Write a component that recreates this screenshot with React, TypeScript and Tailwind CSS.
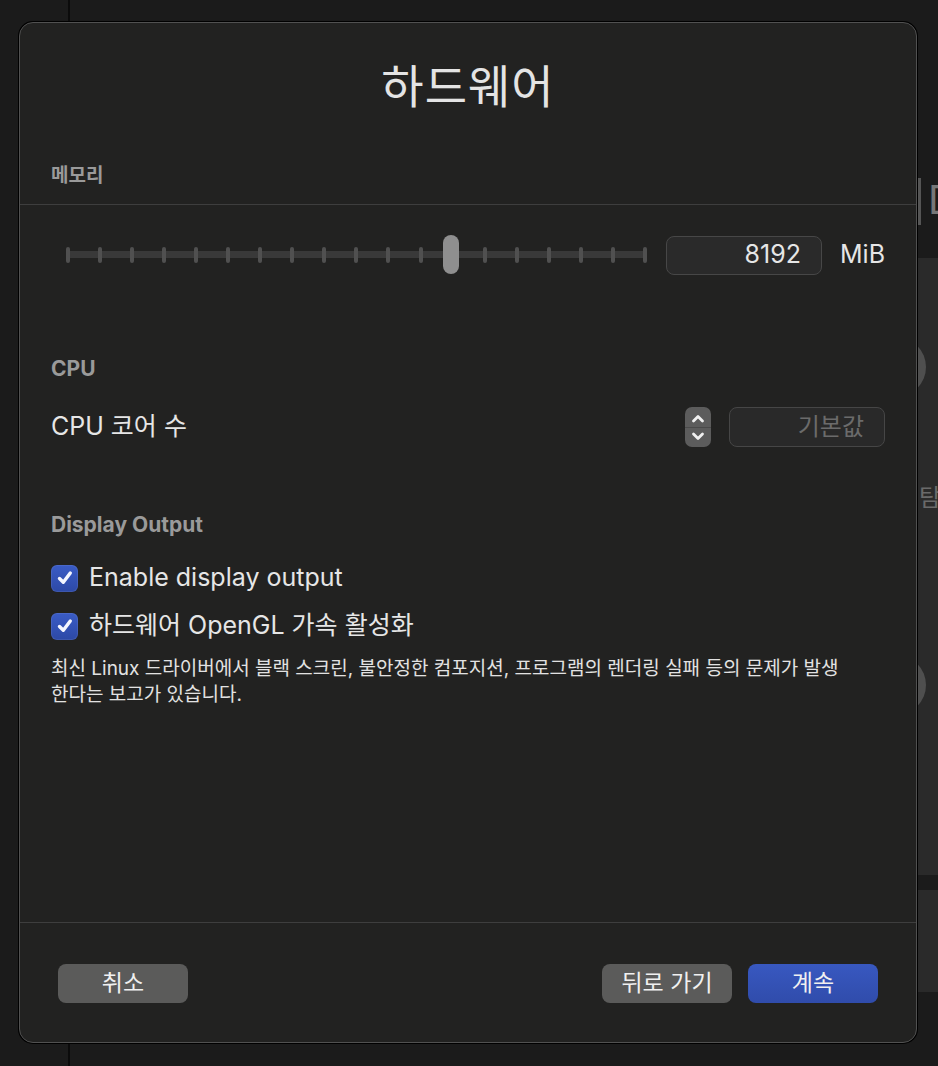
import React from 'react'

const font = { fontFamily: 'Inter, "Noto Sans CJK KR", "Noto Sans", sans-serif' }

function Slider() {
  const ticks = Array.from({ length: 19 })
  return (
    <div className="w-[597px] pl-[15px] pr-[1px]">
      <div className="relative h-[40px] flex items-center">
        <div className="absolute left-0 right-0 top-[16px] h-[7px] rounded-full bg-[#393939]" />
        <div className="relative w-full flex justify-between items-center">
          {ticks.map((_, i) => (
            <div key={i} className="w-[4px] h-[16px] rounded-full bg-[#505050]" />
          ))}
        </div>
        <div className="absolute left-[377px] top-0 w-[16px] h-[39px] rounded-full bg-[#8f8f8f]" />
      </div>
    </div>
  )
}

function Check() {
  return (
    <div className="w-[27px] h-[27px] rounded-[6px] bg-gradient-to-b from-[#3a5cc6] to-[#2d49a6] flex items-center justify-center shadow-[inset_0_0_0_1px_rgba(255,255,255,0.08)]">
      <svg width="20" height="20" viewBox="0 0 20 20" fill="none">
        <path d="M4.5 10.5 L8.3 14.3 L15.3 5" stroke="#f4f6ff" strokeWidth="3.4" strokeLinecap="round" strokeLinejoin="round" />
      </svg>
    </div>
  )
}

export default function App() {
  return (
    <div className="relative w-[938px] h-[1066px] overflow-hidden bg-[#1b1b1b]" style={font}>
      {/* desktop behind the sheet */}
      <div className="absolute left-[68px] top-0 w-[2px] h-full bg-[#0b0b0b]" />
      <div className="absolute left-[918px] top-[178px] w-[3px] h-[47px] bg-[#555]" />
      <div className="absolute left-[928px] top-[172px] text-[40px] leading-[56px] text-[#777]">D</div>
      <div className="absolute left-[917px] top-[258px] w-[30px] h-[617px] bg-[#2a2a2a]" />
      <div className="absolute left-[917px] top-[890px] w-[30px] h-[102px] bg-[#2a2a2a]" />
      <div className="absolute left-[866px] top-[337px] w-[60px] h-[60px] rounded-full bg-[#4f4f4f]" />
      <div className="absolute left-[866px] top-[655px] w-[60px] h-[60px] rounded-full bg-[#4f4f4f]" />
      <div className="absolute left-[919px] top-[480px] text-[24px] leading-[36px] text-[#6a6a6a]">탐</div>

      <div className="pt-[22px] pl-[19px]">
        <div className="relative w-[898px] h-[1021px] rounded-[14px] bg-[#222221] border border-[#515151] shadow-[0_0_0_1px_#000] flex flex-col">
          <div className="h-[126px] flex items-center justify-center text-[46px] text-[#e4e4e4] tracking-[1px]">
            하드웨어
          </div>

          <div className="h-[56px] border-b border-[#3e3e3e] flex items-center px-[31px] text-[19px] font-bold text-[#9a9a9a]">
            메모리
          </div>

          <div className="h-[100px] flex items-center px-[31px]">
            <Slider />
            <div className="ml-[18px] w-[156px] h-[39px] rounded-[8px] bg-[#2a2a2a] border border-[#474747] flex items-center justify-end pr-[20px] text-[25px] text-[#e6e6e6]">
              8192
            </div>
            <div className="ml-[18px] text-[25px] text-[#e6e6e6]">MiB</div>
          </div>

          <div className="mt-[44px] h-[40px] flex items-center px-[31px] text-[21px] font-bold text-[#9a9a9a]">
            CPU
          </div>

          <div className="mt-[18px] h-[40px] flex items-center px-[31px]">
            <div className="text-[25px] text-[#e6e6e6]">CPU 코어 수</div>
            <div className="ml-auto w-[26px] h-[40px] rounded-[7px] bg-[#5c5c5c] flex flex-col items-center justify-center">
              <svg width="16" height="12" viewBox="0 0 16 12" fill="none">
                <path d="M3.5 8 L8 3.5 L12.5 8" stroke="#f0f0f0" strokeWidth="2.8" strokeLinecap="round" strokeLinejoin="round" />
              </svg>
              <div className="w-full h-[1px] bg-[#4a4a4a] my-[2px]" />
              <svg width="16" height="12" viewBox="0 0 16 12" fill="none">
                <path d="M3.5 4 L8 8.5 L12.5 4" stroke="#f0f0f0" strokeWidth="2.8" strokeLinecap="round" strokeLinejoin="round" />
              </svg>
            </div>
            <div className="ml-[18px] w-[156px] h-[40px] rounded-[8px] bg-[#292929] border border-[#464646] flex items-center justify-end pr-[20px] text-[24px] text-[#6b6b6b]">
              기본값
            </div>
          </div>

          <div className="mt-[58px] h-[40px] flex items-center px-[31px] text-[21px] font-bold text-[#9a9a9a]">
            Display Output
          </div>

          <div className="mt-[13px] h-[40px] flex items-center gap-[11px] px-[31px]">
            <Check />
            <span className="text-[25px] text-[#e6e6e6]">Enable display output</span>
          </div>
          <div className="mt-[8px] h-[40px] flex items-center gap-[11px] px-[31px]">
            <Check />
            <span className="text-[25px] text-[#e6e6e6]">하드웨어 OpenGL 가속 활성화</span>
          </div>

          <div className="mt-[10px] px-[31px] text-[19px] leading-[26px] text-[#e2e2e2] whitespace-nowrap">
            최신 Linux 드라이버에서 블랙 스크린, 불안정한 컴포지션, 프로그램의 렌더링 실패 등의 문제가 발생
            <br />
            한다는 보고가 있습니다.
          </div>

          <div className="flex-1" />

          <div className="h-[120px] border-t border-[#3e3e3e] flex items-start pt-[41px] px-[38px]">
            <button className="w-[130px] h-[39px] rounded-[8px] bg-[#5b5b5a] text-[23px] text-[#f0f0f0] flex items-center justify-center">
              취소
            </button>
            <div className="flex-1" />
            <button className="w-[130px] h-[39px] rounded-[8px] bg-[#5b5b5a] text-[23px] text-[#f0f0f0] flex items-center justify-center">
              뒤로 가기
            </button>
            <button className="ml-[16px] w-[130px] h-[39px] rounded-[8px] bg-gradient-to-b from-[#3858c0] to-[#304cab] text-[23px] text-[#f0f0f0] flex items-center justify-center">
              계속
            </button>
          </div>
        </div>
      </div>
    </div>
  )
}
